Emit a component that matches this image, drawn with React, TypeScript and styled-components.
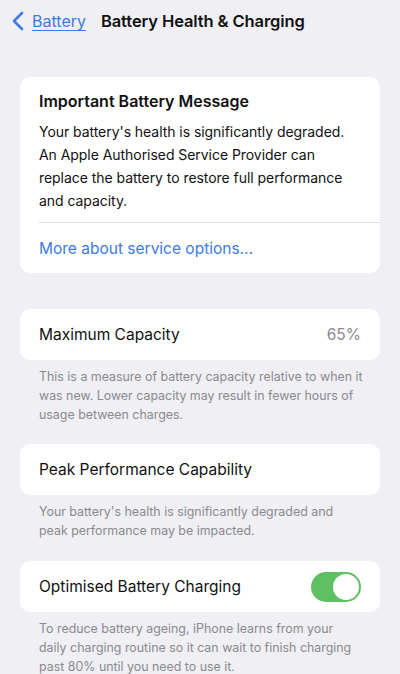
import styled, { createGlobalStyle } from "styled-components";

const GlobalStyle = createGlobalStyle`
  body {
    margin: 0;
    background: #efeff4;
    font-family: Inter, "Noto Sans", "Liberation Sans", sans-serif;
    color: #111;
    -webkit-font-smoothing: antialiased;
  }
`;

const Page = styled.div`
  width: 400px;
  height: 674px;
  overflow: hidden;
  background: #efeff4;
`;

const NavBar = styled.div`
  display: flex;
  align-items: center;
  height: 42px;
  padding-left: 12px;
`;

const BackLink = styled.a`
  display: flex;
  align-items: center;
  gap: 8px;
  color: #3d7be0;
  font-size: 16px;
  text-decoration: none;

  span {
    text-decoration: underline;
    text-underline-offset: 3px;
    text-decoration-thickness: 1px;
  }
`;

const Title = styled.h1`
  margin: 0 0 0 15px;
  font-size: 16.5px;
  font-weight: 600;
  letter-spacing: -0.1px;
`;

const Content = styled.div`
  padding: 35px 20px 0;
`;

const Card = styled.div`
  background: #fff;
  border-radius: 10px;
`;

const Message = styled.div`
  padding: 13px 19px 10px;
`;

const MessageTitle = styled.div`
  font-size: 16px;
  font-weight: 600;
  line-height: 22px;
  margin-bottom: 8px;
`;

const MessageBody = styled.div`
  font-size: 14px;
  line-height: 23px;
  letter-spacing: -0.05px;
  white-space: nowrap;
`;

const Divider = styled.div`
  height: 1px;
  margin-left: 19px;
  background: #dcdce0;
`;

const ServiceLink = styled.div`
  display: flex;
  align-items: center;
  height: 50px;
  padding: 0 19px;
  font-size: 15.5px;
  color: #3d7be0;
`;

const Row = styled(Card)<{ $top: number }>`
  display: flex;
  align-items: center;
  justify-content: space-between;
  height: 51px;
  padding: 0 19px;
  margin-top: ${(p) => p.$top}px;
  font-size: 15.5px;
`;

const Value = styled.span`
  color: #8a8a8e;
`;

const Footer = styled.p`
  margin: 0;
  padding: 7px 19px 0;
  font-size: 12.4px;
  line-height: 19px;
  color: #8a8a8e;
  white-space: nowrap;
`;

const Toggle = styled.div<{ $on: boolean }>`
  display: flex;
  justify-content: ${(p) => (p.$on ? "flex-end" : "flex-start")};
  width: 50px;
  height: 30px;
  padding: 2px;
  box-sizing: border-box;
  border-radius: 15px;
  background: ${(p) => (p.$on ? "#5fc063" : "#e5e5ea")};
`;

const Knob = styled.div`
  width: 26px;
  height: 26px;
  border-radius: 50%;
  background: #fff;
`;

function Chevron() {
  return (
    <svg width="12" height="20" viewBox="0 0 12 20" fill="none">
      <path
        d="M10 2 L2 10 L10 18"
        stroke="#3d7be0"
        strokeWidth="2.6"
        strokeLinecap="round"
        strokeLinejoin="round"
      />
    </svg>
  );
}

export default function App() {
  return (
    <Page>
      <GlobalStyle />
      <NavBar>
        <BackLink>
          <Chevron />
          <span>Battery</span>
        </BackLink>
        <Title>Battery Health &amp; Charging</Title>
      </NavBar>
      <Content>
        <Card>
          <Message>
            <MessageTitle>Important Battery Message</MessageTitle>
            <MessageBody>
              Your battery's health is significantly degraded.
              <br />
              An Apple Authorised Service Provider can
              <br />
              replace the battery to restore full performance
              <br />
              and capacity.
            </MessageBody>
          </Message>
          <Divider />
          <ServiceLink>More about service options...</ServiceLink>
        </Card>

        <Row $top={36}>
          <span>Maximum Capacity</span>
          <Value>65%</Value>
        </Row>
        <Footer>
          This is a measure of battery capacity relative to when it
          <br />
          was new. Lower capacity may result in fewer hours of
          <br />
          usage between charges.
        </Footer>

        <Row $top={20}>
          <span>Peak Performance Capability</span>
        </Row>
        <Footer>
          Your battery's health is significantly degraded and
          <br />
          peak performance may be impacted.
        </Footer>

        <Row $top={21}>
          <span>Optimised Battery Charging</span>
          <Toggle $on>
            <Knob />
          </Toggle>
        </Row>
        <Footer>
          To reduce battery ageing, iPhone learns from your
          <br />
          daily charging routine so it can wait to finish charging
          <br />
          past 80% until you need to use it.
        </Footer>
      </Content>
    </Page>
  );
}
